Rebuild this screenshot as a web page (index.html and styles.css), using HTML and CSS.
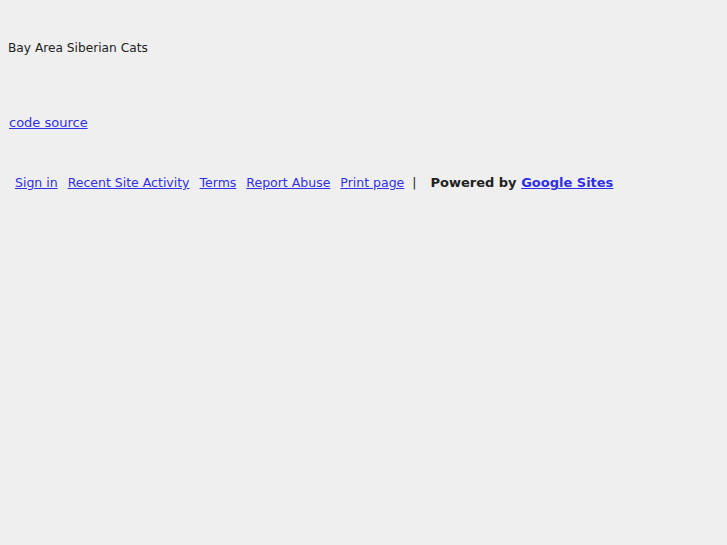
FILE: index.html
```html
<!DOCTYPE html>
<html lang="en">
<head>
    <meta charset="UTF-8">
    <title>Bay Area Siberian Cats</title>
    <link rel="stylesheet" href="styles.css">
</head>
<body>
    <div class="site-title">Bay Area Siberian Cats</div>
    <div class="code-link"><a href="#">code source</a></div>
    <div class="footer">
        <a href="#">Sign in</a>
        <a href="#">Recent Site Activity</a>
        <a href="#">Terms</a>
        <a href="#">Report Abuse</a>
        <a href="#" class="last">Print page</a>
        <span class="sep">|</span>
        <span class="powered">Powered by <a href="#">Google Sites</a></span>
    </div>
</body>
</html>
```

FILE: styles.css
```css
body {
    margin: 0;
    padding: 8px;
    background: #efefef;
    font-family: "DejaVu Sans", Verdana, sans-serif;
    font-size: 13px;
    color: #222;
}

a {
    color: #2f2fe6;
}

.site-title {
    margin-top: 32px;
    line-height: 16px;
    font-size: 12.2px;
}

.code-link {
    margin-top: 59px;
    padding-left: 1px;
    line-height: 16px;
}

.footer {
    margin-top: 44px;
    padding-left: 7px;
    line-height: 16px;
    font-size: 12.5px;
}

.footer a {
    margin-right: 6px;
}

.footer a.last {
    margin-right: 4px;
}

.sep {
    margin-right: 10px;
}

.powered {
    font-size: 13px;
    font-weight: bold;
}

.powered a {
    margin-right: 0;
}
```
